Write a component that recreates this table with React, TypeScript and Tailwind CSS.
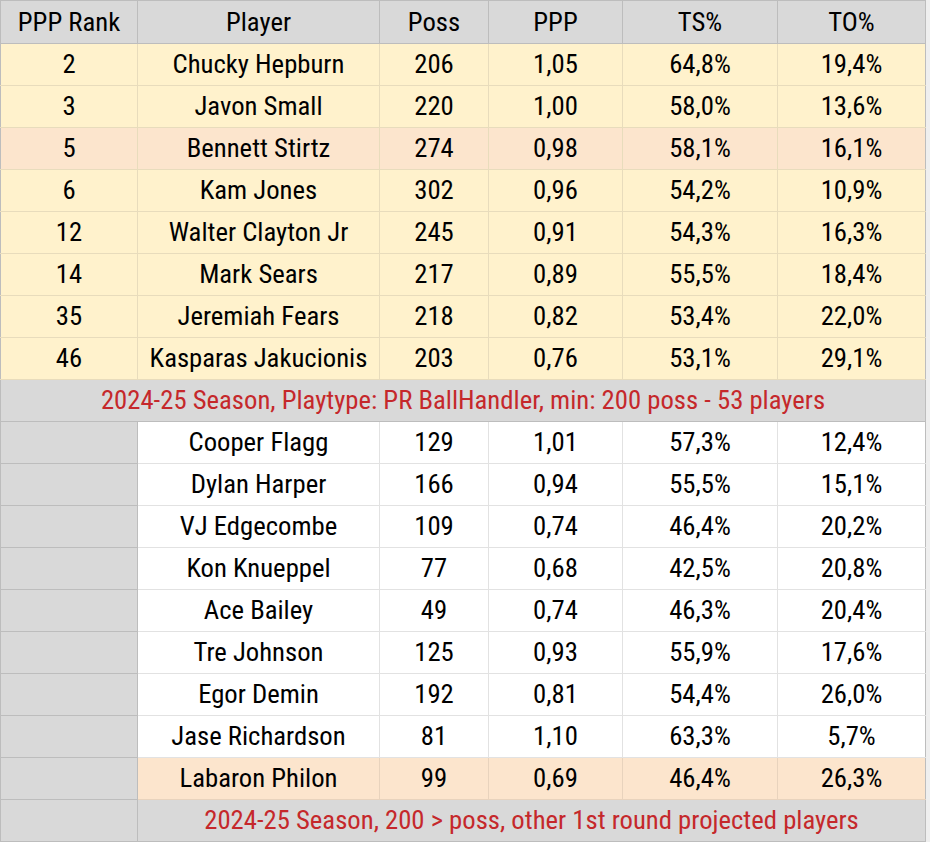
import React from "react";

type Row = [string, string, string, string, string, string, string];

const top: Row[] = [
  ["2", "Chucky Hepburn", "206", "1,05", "64,8%", "19,4%", "y"],
  ["3", "Javon Small", "220", "1,00", "58,0%", "13,6%", "y"],
  ["5", "Bennett Stirtz", "274", "0,98", "58,1%", "16,1%", "p"],
  ["6", "Kam Jones", "302", "0,96", "54,2%", "10,9%", "y"],
  ["12", "Walter Clayton Jr", "245", "0,91", "54,3%", "16,3%", "y"],
  ["14", "Mark Sears", "217", "0,89", "55,5%", "18,4%", "y"],
  ["35", "Jeremiah Fears", "218", "0,82", "53,4%", "22,0%", "y"],
  ["46", "Kasparas Jakucionis", "203", "0,76", "53,1%", "29,1%", "y"],
];

const bottom: Row[] = [
  ["", "Cooper Flagg", "129", "1,01", "57,3%", "12,4%", "w"],
  ["", "Dylan Harper", "166", "0,94", "55,5%", "15,1%", "w"],
  ["", "VJ Edgecombe", "109", "0,74", "46,4%", "20,2%", "w"],
  ["", "Kon Knueppel", "77", "0,68", "42,5%", "20,8%", "w"],
  ["", "Ace Bailey", "49", "0,74", "46,3%", "20,4%", "w"],
  ["", "Tre Johnson", "125", "0,93", "55,9%", "17,6%", "w"],
  ["", "Egor Demin", "192", "0,81", "54,4%", "26,0%", "w"],
  ["", "Jase Richardson", "81", "1,10", "63,3%", "5,7%", "w"],
  ["", "Labaron Philon", "99", "0,69", "46,4%", "26,3%", "p"],
];

const widths = ["w-[137px]", "w-[242px]", "w-[109px]", "w-[134px]", "w-[155px]", "w-[148px]"];

function T({ children }: { children: React.ReactNode }) {
  return <span className="inline-block">{children}</span>;
}

export default function App() {
  return (
    <div
      className="w-[930px] h-[842px] bg-[#efefef] overflow-hidden text-black"
      style={{ fontFamily: '"Roboto Condensed", Roboto, "Liberation Sans", sans-serif' }}
    >
      <table className="border-collapse table-fixed w-[926px] text-[26.7px] leading-none">
        <colgroup>
          {widths.map((w, i) => (
            <col key={i} className={w} />
          ))}
        </colgroup>
        <tbody>
          <tr className="h-[43px] bg-[#d9d9d9]">
            {["PPP Rank", "Player", "Poss", "PPP", "TS%", "TO%"].map((h) => (
              <td key={h} className="border border-[#bdbdbd] text-center align-middle p-0">
                <T>{h}</T>
              </td>
            ))}
          </tr>
          {top.map((r) => (
            <tr key={r[1]} className={`h-[42px] ${r[6] === "p" ? "bg-[#fce5cd]" : "bg-[#fff2cc]"}`}>
              {r.slice(0, 6).map((c, i) => (
                <td
                  key={i}
                  className={`border ${i === 0 ? "border-l-[#bdbdbd]" : ""} ${
                    i === 5 ? "border-r-[#bdbdbd]" : ""
                  } border-[#e8dcbc] text-center align-middle p-0`}
                >
                  <T>{c}</T>
                </td>
              ))}
            </tr>
          ))}
          <tr className="h-[42px] bg-[#d9d9d9]">
            <td colSpan={6} className="border border-[#bdbdbd] text-center align-middle p-0 text-[#c5282b]">
              <T>2024-25 Season, Playtype: PR BallHandler, min: 200 poss - 53 players</T>
            </td>
          </tr>
          {bottom.map((r) => (
            <tr key={r[1]} className="h-[42px]">
              {r.slice(0, 6).map((c, i) => (
                <td
                  key={i}
                  className={`border p-0 text-center align-middle ${
                    i === 0
                      ? "bg-[#d9d9d9] border-[#bdbdbd]"
                      : r[6] === "p"
                      ? "bg-[#fce5cd] border-[#e8d3bd]"
                      : "bg-white border-[#e2e2e2]"
                  } ${i === 5 ? "border-r-[#bdbdbd]" : ""}`}
                >
                  <T>{c}</T>
                </td>
              ))}
            </tr>
          ))}
          <tr className="h-[42px] bg-[#d9d9d9]">
            <td className="border border-[#bdbdbd] p-0"></td>
            <td colSpan={5} className="border border-[#bdbdbd] text-center align-middle p-0 text-[#c5282b]">
              <T>2024-25 Season, 200 &gt; poss, other 1st round projected players</T>
            </td>
          </tr>
        </tbody>
      </table>
    </div>
  );
}
